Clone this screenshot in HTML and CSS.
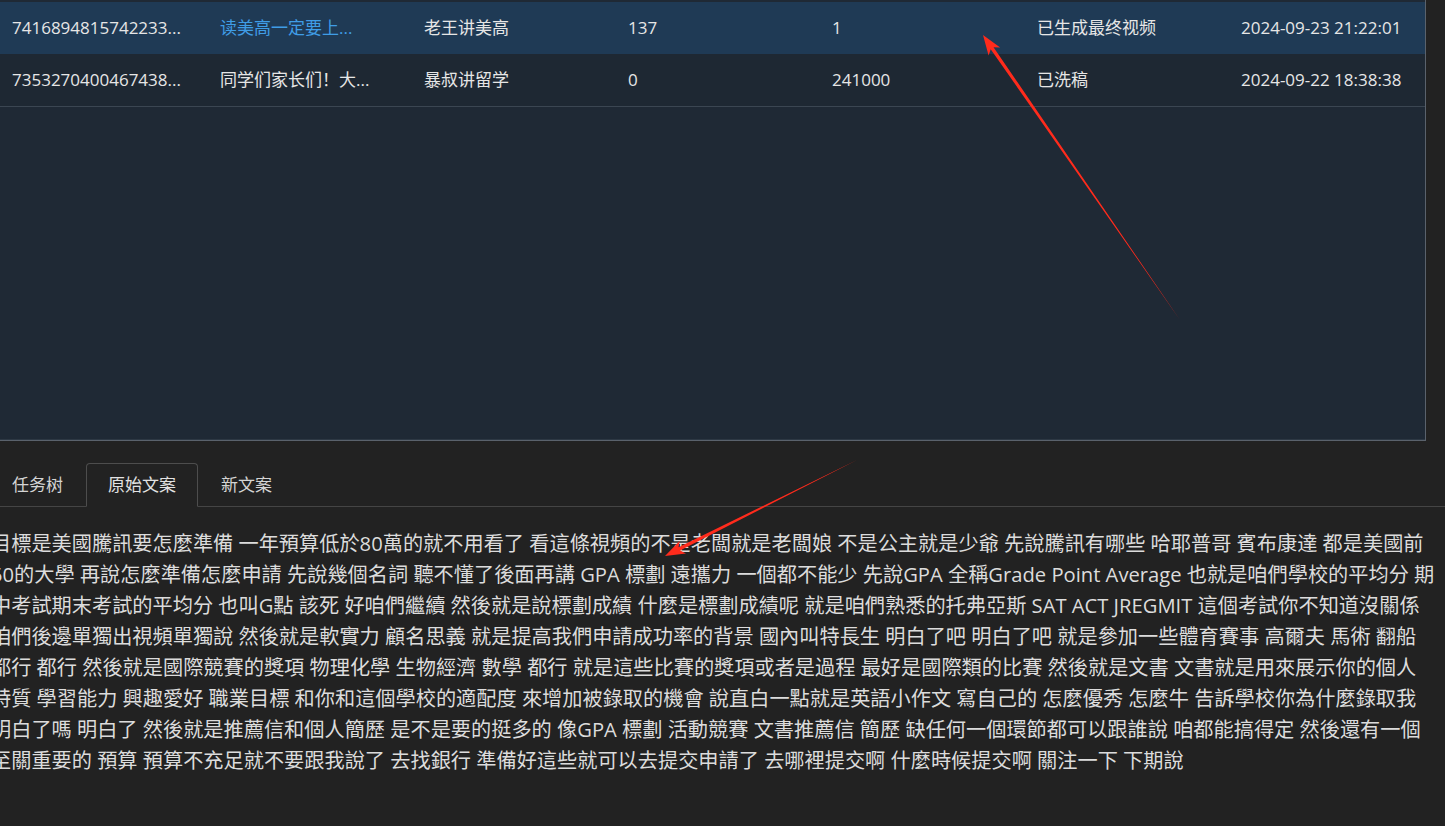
FILE: index.html
```html
<!DOCTYPE html>
<html lang="zh">
<head>
<meta charset="utf-8">
<title>任务列表</title>
<link rel="stylesheet" href="styles.css">
</head>
<body>
<div class="page">
  <div class="table-panel">
    <table class="task-table">
      <colgroup>
        <col class="c1"><col class="c2"><col class="c3"><col class="c4"><col class="c5"><col class="c6"><col class="c7">
      </colgroup>
      <tbody>
        <tr class="row selected">
          <td>7416894815742233...</td>
          <td><a class="title-link">读美高一定要上...</a></td>
          <td>老王讲美高</td>
          <td>137</td>
          <td>1</td>
          <td>已生成最终视频</td>
          <td>2024-09-23 21:22:01</td>
        </tr>
        <tr class="row">
          <td>7353270400467438...</td>
          <td>同学们家长们！大...</td>
          <td>暴叔讲留学</td>
          <td>0</td>
          <td>241000</td>
          <td>已洗稿</td>
          <td>2024-09-22 18:38:38</td>
        </tr>
      </tbody>
    </table>
  </div>

  <ul class="tabs">
    <li class="tab">任务树</li>
    <li class="tab active">原始文案</li>
    <li class="tab">新文案</li>
  </ul>

  <p class="script-text">目標是美國騰訊要怎麼準備 一年預算低於80萬的就不用看了 看這條視頻的不是老闆就是老闆娘 不是公主就是少爺 先說騰訊有哪些 哈耶普哥 賓布康達 都是美國前<br>50的大學 再說怎麼準備怎麼申請 先說幾個名詞 聽不懂了後面再講 GPA 標劃 遠攜力 一個都不能少 先說GPA 全稱Grade Point Average 也就是咱們學校的平均分 期<br>中考試期末考試的平均分 也叫G點 該死 好咱們繼續 然後就是說標劃成績 什麼是標劃成績呢 就是咱們熟悉的托弗亞斯 SAT ACT JREGMIT 這個考試你不知道沒關係<br>咱們後邊單獨出視頻單獨說 然後就是軟實力 顧名思義 就是提高我們申請成功率的背景 國內叫特長生 明白了吧 明白了吧 就是參加一些體育賽事 高爾夫 馬術 翻船<br>都行 都行 然後就是國際競賽的獎項 物理化學 生物經濟 數學 都行 就是這些比賽的獎項或者是過程 最好是國際類的比賽 然後就是文書 文書就是用來展示你的個人<br>特質 學習能力 興趣愛好 職業目標 和你和這個學校的適配度 來增加被錄取的機會 說直白一點就是英語小作文 寫自己的 怎麼優秀 怎麼牛 告訴學校你為什麼錄取我<br>明白了嗎 明白了 然後就是推薦信和個人簡歷 是不是要的挺多的 像GPA 標劃 活動競賽 文書推薦信 簡歷 缺任何一個環節都可以跟誰說 咱都能搞得定 然後還有一個<br>至關重要的 預算 預算不充足就不要跟我說了 去找銀行 準備好這些就可以去提交申請了 去哪裡提交啊 什麼時候提交啊 關注一下 下期說</p>

  <svg class="annotations" width="1445" height="826" viewBox="0 0 1445 826" aria-hidden="true">
    <polygon fill="#ff2b1c" points="983,35 1000.2,47.5 993.5,47.2 1180,320 990.7,49.2 988.6,55.5"/>
    <polygon fill="#ff2b1c" points="665,556 686,553.4 680.1,550.4 857,460 678.5,547.2 679.8,540.8"/>
  </svg>
</div>
</body>
</html>
```

FILE: styles.css
```css
html, body {
  margin: 0;
  padding: 0;
  background: #222222;
  overflow: hidden;
}

.page {
  position: relative;
  width: 1445px;
  height: 826px;
  overflow: hidden;
  font-family: "Open Sans", "Noto Sans CJK SC", sans-serif;
  color: #e6e6e6;
}

.table-panel {
  margin-left: -4px;
  width: 1430px;
  height: 441px;
  box-sizing: border-box;
  padding-top: 2px;
  background: #1f2935;
  border-right: 1px solid #5a626c;
  border-bottom: 1px solid #5a626c;
  box-shadow: inset -1px -7px 0 -6px #2d3844;
  overflow: hidden;
}

.task-table {
  width: 1429px;
  border-collapse: collapse;
  table-layout: fixed;
  font-size: 17px;
}

.c1 { width: 208px; }
.c2, .c3, .c4, .c6 { width: 204px; }
.c5 { width: 205px; }
.c7 { width: 200px; }

.row td {
  height: 52px;
  padding: 0 0 0 16px;
  white-space: nowrap;
  overflow: hidden;
  vertical-align: middle;
  line-height: 24px;
}

.row.selected {
  background: #1f3a55;
}

.row:not(.selected) {
  background: #1e2833;
  border-bottom: 1px solid #3b4652;
}

.title-link {
  color: #3f9de6;
  text-decoration: none;
}

.tabs {
  display: flex;
  list-style: none;
  margin: 22px 0 0 -10px;
  padding: 0;
  border-bottom: 1px solid #454545;
}

.tab {
  padding: 9px 21px;
  line-height: 24px;
  font-size: 17px;
  color: #d4d4d4;
  border: 1px solid transparent;
  border-radius: 4px 4px 0 0;
  margin-right: 1px;
  margin-bottom: -1px;
}

.tab.active {
  color: #e2e2e2;
  background: #222222;
  border-color: #4d4d4d #4d4d4d #222222;
}

.script-text {
  margin: 21px 0 0 -9px;
  font-size: 20.2px;
  line-height: 31px;
  color: #dcdcdc;
  white-space: nowrap;
}

.annotations {
  position: absolute;
  left: 0;
  top: 0;
  pointer-events: none;
}
```
